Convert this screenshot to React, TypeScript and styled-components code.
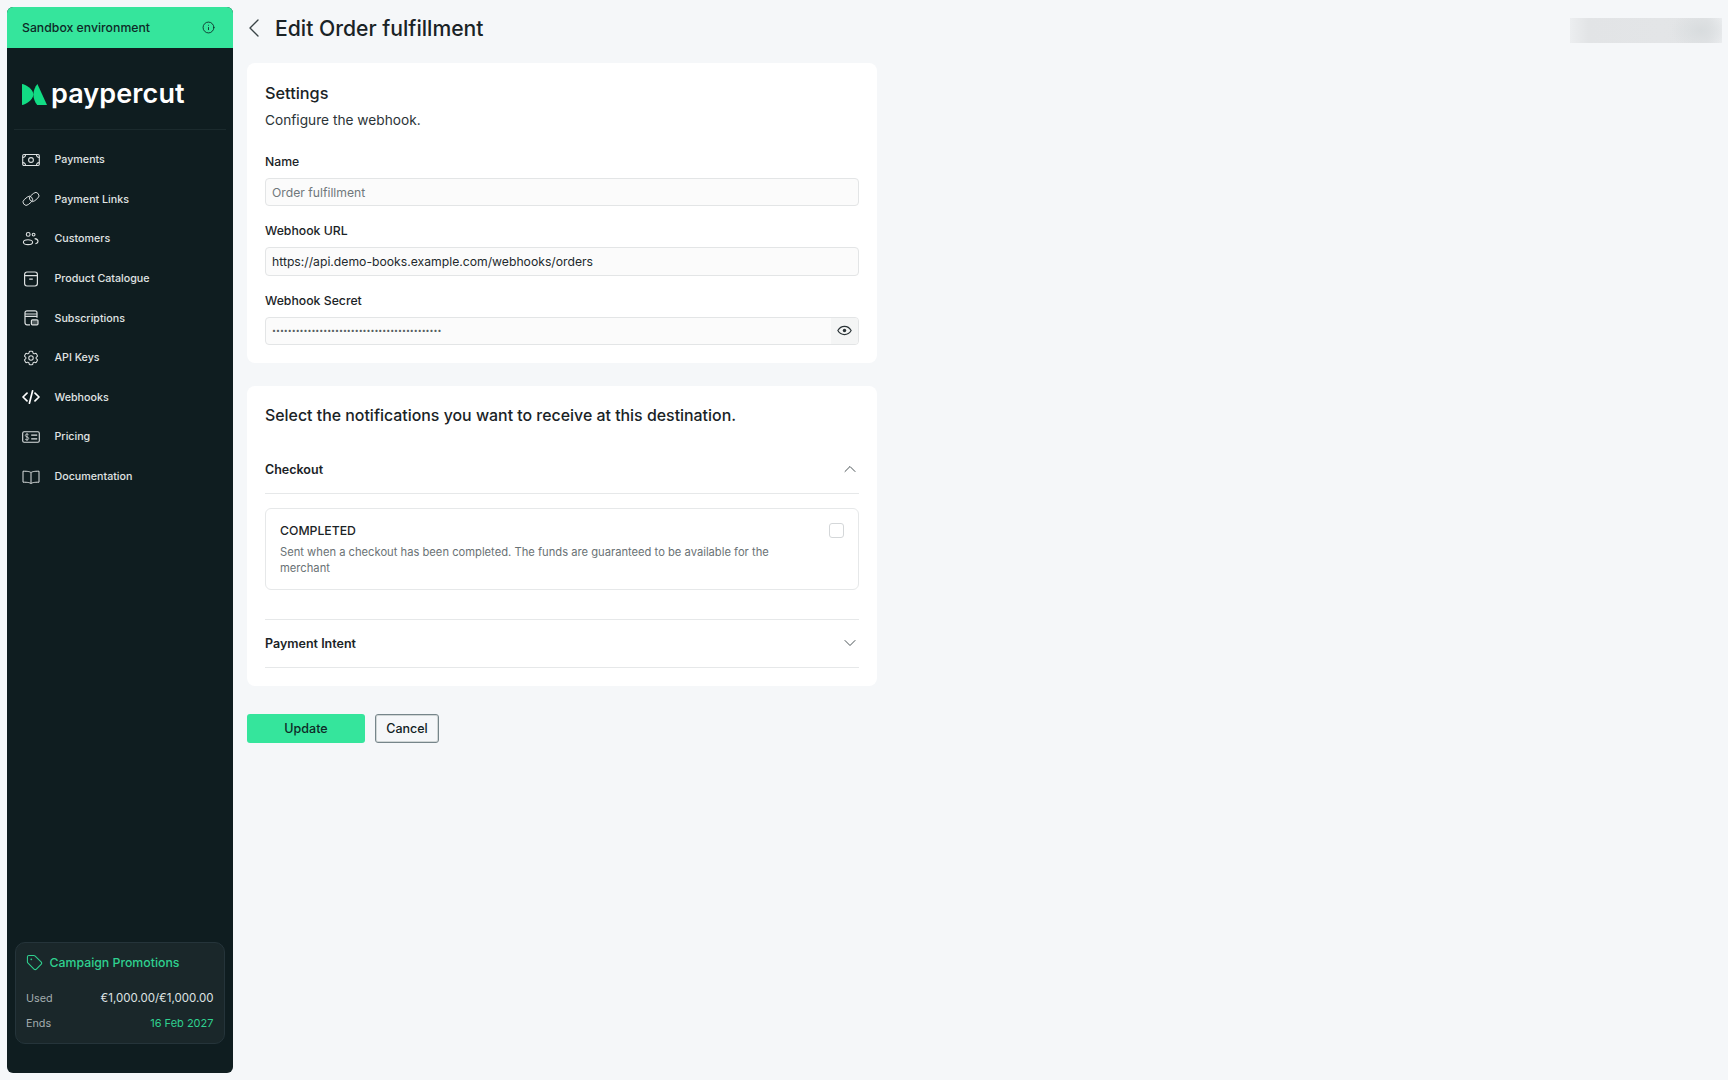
import React from "react";
import styled, { createGlobalStyle } from "styled-components";
import { ChevronDown, ChevronLeft, ChevronUp, Info, Tag } from "lucide-react";
import { HiOutlineCog6Tooth } from "react-icons/hi2";

const GlobalStyle = createGlobalStyle`
  html, body {
    margin: 0;
    padding: 0;
    background: #f5f7f9;
    font-family: "Inter", "Liberation Sans", sans-serif;
    color: #1a2326;
  }
  * {
    box-sizing: border-box;
  }
`;

const PaymentsIcon = () => (
  <svg width="18" height="18" viewBox="0 0 18 18" fill="none" stroke="currentColor" strokeWidth="1.1">
    <rect x="0.7" y="3.5" width="16.6" height="11" rx="1.2" />
    <circle cx="9" cy="9" r="2.4" />
    <path d="M.7 6.4a2.6 2.6 0 0 0 2.8-2.9M14.5 3.5a2.6 2.6 0 0 0 2.8 2.9M.7 11.6a2.6 2.6 0 0 1 2.8 2.9M14.5 14.5a2.6 2.6 0 0 1 2.8-2.9" />
  </svg>
);

const LinkIcon = () => (
  <svg width="18" height="18" viewBox="0 0 18 18" fill="none" stroke="currentColor" strokeWidth="0.9">
    <rect x="0.6" y="7.6" width="10.4" height="6.4" rx="3.2" transform="rotate(-40 5.8 10.8)" />
    <rect x="7" y="3.8" width="10.4" height="6.4" rx="3.2" transform="rotate(-40 12.2 7)" />
  </svg>
);

const CustomersIcon = () => (
  <svg width="18" height="18" viewBox="0 0 18 18" fill="none" stroke="currentColor" strokeWidth="1.1">
    <circle cx="6.2" cy="4.4" r="1.9" />
    <circle cx="11.6" cy="4.6" r="1.4" />
    <ellipse cx="6" cy="12.2" rx="4.6" ry="2.4" />
    <path d="M12.6 8.6c2 .2 3.4 1.2 3.4 2.6 0 1.2-1 2.1-2.6 2.5" />
  </svg>
);

const CatalogueIcon = () => (
  <svg width="18" height="18" viewBox="0 0 18 18" fill="none" stroke="currentColor" strokeWidth="1.2">
    <rect x="2.6" y="2" width="12.8" height="14" rx="2.4" />
    <path d="M2.6 5.6h12.8M7.2 9.2h3.6" />
  </svg>
);

const SubscriptionsIcon = () => (
  <svg width="18" height="18" viewBox="0 0 18 18" fill="none" stroke="currentColor" strokeWidth="1.2">
    <path d="M8 15.8H5a2 2 0 0 1-2-2V3.8a2 2 0 0 1 2-2h8a2 2 0 0 1 2 2v5" />
    <path d="M3 5h12M3 7.4h12" />
    <rect x="9.4" y="10.8" width="6.6" height="5" rx="1" fill="currentColor" fillOpacity="0.3" />
  </svg>
);

const CodeIcon = () => (
  <svg width="18" height="18" viewBox="0 0 18 18" fill="none" stroke="#ffffff" strokeWidth="1.7" strokeLinecap="round" strokeLinejoin="round">
    <path d="M5 5.2 1 9l4 3.8M13 5.2 17 9l-4 3.8M10.6 2.800 7.400 15.200" />
  </svg>
);

const PricingIcon = () => (
  <svg width="18" height="18" viewBox="0 0 18 18" fill="none" stroke="currentColor" strokeWidth="1.1">
    <rect x="0.7" y="3.8" width="16.6" height="10.4" rx="1.4" />
    <path d="M6.6 6.8c-.4-.5-1-.7-1.6-.7-1 0-1.7.5-1.7 1.4 0 1.8 3.4.9 3.4 2.9 0 .9-.8 1.5-1.8 1.5-.7 0-1.3-.3-1.8-.8M5 5.2v7.6" strokeWidth="0.8" />
    <path d="M9.2 7.2h6M9.2 10.8h6" strokeWidth="1.2" />
  </svg>
);

const BookIcon = () => (
  <svg width="18" height="18" viewBox="0 0 18 18" fill="none" stroke="currentColor" strokeWidth="1" strokeLinejoin="round">
    <path d="M9 4.6C7.6 3.6 6 3.2 1 3.2v11c5 0 6.600.4 8 1.4 1.4-1 3-1.4 8-1.4v-11c-5 0-6.600.4-8 1.400Z" />
    <path d="M9 4.6v11" />
  </svg>
);

const EyeIcon = () => (
  <svg width="15" height="15" viewBox="0 0 14 14" fill="none" stroke="#2b3437" strokeWidth="1.1">
    <path d="M.8 7C2.2 4.6 4.4 3.2 7 3.2s4.8 1.4 6.2 3.8c-1.4 2.4-3.6 3.8-6.2 3.8S2.200 9.400.8 7Z" />
    <circle cx="7" cy="7" r="1.6" fill="#2b3437" stroke="none" />
  </svg>
);

const LogoMark = () => (
  <svg width="25" height="21" viewBox="0 0 25 21">
    <path fill="#12dc84" d="M0 0c3.400.4 11 5 11.500 10.500C11 16 3.400 20.600 0 21Z" />
    <path fill="#12dc84" d="M15.400 0 25 21H15.200c-2.400-3-3.800-6.800-3.800-10.300 0-4 1.600-7.900 4-10.700Z" />
  </svg>
);

const navItems = [
  { label: "Payments", icon: <PaymentsIcon /> },
  { label: "Payment Links", icon: <LinkIcon /> },
  { label: "Customers", icon: <CustomersIcon /> },
  { label: "Product Catalogue", icon: <CatalogueIcon /> },
  { label: "Subscriptions", icon: <SubscriptionsIcon /> },
  { label: "API Keys", icon: <HiOutlineCog6Tooth size={20} strokeWidth={1.4} /> },
  { label: "Webhooks", icon: <CodeIcon /> },
  { label: "Pricing", icon: <PricingIcon /> },
  { label: "Documentation", icon: <BookIcon /> },
];

export default function App() {
  return (
    <>
      <GlobalStyle />
      <Page>
        <Sidebar>
          <Banner>
            <span>Sandbox environment</span>
            <Info size={13} strokeWidth={1.6} />
          </Banner>
          <LogoRow>
            <LogoMark />
            <LogoText>paypercut</LogoText>
          </LogoRow>
          <Nav>
            {navItems.map((item) => (
              <NavItem key={item.label}>
                <NavIcon>{item.icon}</NavIcon>
                <span>{item.label}</span>
              </NavItem>
            ))}
          </Nav>
          <Campaign>
            <CampaignTitle>
              <Tag size={17} strokeWidth={1.5} />
              <span>Campaign Promotions</span>
            </CampaignTitle>
            <CampaignRow>
              <CampaignKey>Used</CampaignKey>
              <CampaignValue>€1,000.00/€1,000.00</CampaignValue>
            </CampaignRow>
            <CampaignRow>
              <CampaignKey>Ends</CampaignKey>
              <CampaignValue $accent>16 Feb 2027</CampaignValue>
            </CampaignRow>
          </Campaign>
        </Sidebar>

        <Main>
          <Header>
            <TitleGroup>
              <BackIcon>
                <ChevronLeft size={32} strokeWidth={1} />
              </BackIcon>
              <Title>Edit Order fulfillment</Title>
            </TitleGroup>
            <BlurredBox />
          </Header>

          <Column>
            <Card>
              <CardTitle>Settings</CardTitle>
              <CardText>Configure the webhook.</CardText>
              <Fields>
                <Field>
                  <Label>Name</Label>
                  <InputWrap>
                    <Input placeholder="Order fulfillment" readOnly />
                  </InputWrap>
                </Field>
                <Field>
                  <Label>Webhook URL</Label>
                  <InputWrap>
                    <Input defaultValue="https://api.demo-books.example.com/webhooks/orders" readOnly />
                  </InputWrap>
                </Field>
                <Field>
                  <Label>Webhook Secret</Label>
                  <InputWrap>
                    <SecretInput type="password" defaultValue={"x".repeat(43)} readOnly />
                    <EyeAddon>
                      <EyeIcon />
                    </EyeAddon>
                  </InputWrap>
                </Field>
              </Fields>
            </Card>

            <Card>
              <SectionTitle>Select the notifications you want to receive at this destination.</SectionTitle>
              <AccordionHeader>
                <span>Checkout</span>
                <ChevronUp size={20} strokeWidth={1.1} />
              </AccordionHeader>
              <EventBox>
                <div>
                  <EventTitle>COMPLETED</EventTitle>
                  <EventText>
                    Sent when a checkout has been completed. The funds are guaranteed to be available for the merchant
                  </EventText>
                </div>
                <CheckBox />
              </EventBox>
              <AccordionHeader $closed>
                <span>Payment Intent</span>
                <ChevronDown size={20} strokeWidth={1.1} />
              </AccordionHeader>
            </Card>

            <Actions>
              <PrimaryButton>Update</PrimaryButton>
              <SecondaryButton>Cancel</SecondaryButton>
            </Actions>
          </Column>
        </Main>
      </Page>
    </>
  );
}

const Page = styled.div`
  display: flex;
  gap: 14.5px;
  height: 1080px;
  padding: 7px 6px 7px 7px;
`;

const Sidebar = styled.aside`
  flex: none;
  display: flex;
  flex-direction: column;
  width: 225.500px;
  background: #0f1d20;
  border-radius: 6px;
  overflow: hidden;
`;

const Banner = styled.div`
  flex: none;
  display: flex;
  align-items: center;
  justify-content: space-between;
  height: 41px;
  padding: 0 18px 0 15px;
  background: #35e59c;
  color: #0e2a27;
  font-size: 12.250px;
  font-weight: 500;
`;

const LogoRow = styled.div`
  flex: none;
  display: flex;
  align-items: center;
  gap: 4px;
  height: 82px;
  margin: 0 7px;
  padding: 12px 8px 0;
  border-bottom: 1px solid #1b2a2d;
`;

const LogoText = styled.span`
  color: #ffffff;
  font-family: "Inter", sans-serif;
  font-size: 27px;
  font-weight: 600;
  line-height: 1;
  letter-spacing: 0.1px;
  position: relative;
  top: -1px;
`;

const Nav = styled.nav`
  display: flex;
  flex-direction: column;
  padding-top: 10px;
`;

const NavItem = styled.a`
  display: flex;
  align-items: center;
  gap: 15px;
  height: 39.6px;
  padding-left: 14.500px;
  color: #e0e4e4;
  font-size: 10.700px;
  font-weight: 500;
`;

const NavIcon = styled.span`
  display: flex;
  align-items: center;
  justify-content: center;
  width: 18px;
  height: 18px;
  color: #dde1e1;
`;

const Campaign = styled.section`
  margin: auto 7.500px 29px;
  padding: 9px 10.500px 11px;
  height: 102px;
  background: #1a272a;
  border: 1px solid #25343a;
  border-radius: 10px;
`;

const CampaignTitle = styled.div`
  display: flex;
  align-items: center;
  gap: 6.500px;
  height: 20px;
  margin-bottom: 13.500px;
  color: #2fd08f;
  font-size: 12.300px;
  font-weight: 500;
`;

const CampaignRow = styled.div`
  display: flex;
  align-items: center;
  justify-content: space-between;
  height: 25px;
  font-size: 11.500px;
`;

const CampaignKey = styled.span`
  color: #a3adae;
  font-size: 10.800px;
`;

const CampaignValue = styled.span<{ $accent?: boolean }>`
  color: ${(p) => (p.$accent ? "#2fd08f" : "#dfe3e3")};
  font-size: ${(p) => (p.$accent ? "11px" : "11.500px")};
`;

const Main = styled.main`
  flex: 1;
  display: flex;
  flex-direction: column;
  min-width: 0;
`;

const Header = styled.header`
  flex: none;
  display: flex;
  align-items: center;
  justify-content: space-between;
  height: 42px;
  margin-bottom: 14px;
`;

const TitleGroup = styled.div`
  display: flex;
  align-items: center;
  gap: 11px;
`;

const BackIcon = styled.span`
  display: flex;
  justify-content: center;
  color: #3a4447;
  width: 18px;
  margin-left: -2px;
  margin-right: 1px;

  svg {
    flex: none;
  }
`;

const Title = styled.h1`
  margin: 0;
  font-size: 21.150px;
  font-weight: 500;
  color: #1a2326;
`;

const BlurredBox = styled.div`
  width: 152px;
  height: 25px;
  margin-top: 4px;
  background:
    radial-gradient(ellipse 30px 20px at 86% 50%, #d8dcde, transparent),
    linear-gradient(90deg, #eceef0, #e2e4e6 12%, #e3e5e7 60%, #e2e4e6 90%, #eceef0);
`;

const Column = styled.div`
  display: flex;
  flex-direction: column;
  gap: 22.500px;
  width: 630px;
`;

const Card = styled.section`
  display: flex;
  flex-direction: column;
  padding: 18px 18px 18px;
  background: #ffffff;
  border-radius: 8px;
`;

const CardTitle = styled.h2`
  margin: 0;
  font-size: 16.300px;
  font-weight: 500;
  line-height: 24px;
`;

const CardText = styled.p`
  margin: 4px 0 0;
  font-size: 13.700px;
  line-height: 22px;
  color: #2b3437;
`;

const Fields = styled.div`
  display: flex;
  flex-direction: column;
  gap: 16px;
  margin-top: 22px;
`;

const Field = styled.div`
  display: flex;
  flex-direction: column;
  gap: 7px;
`;

const Label = styled.label`
  font-size: 12.250px;
  font-weight: 500;
  line-height: 18px;
`;

const InputWrap = styled.div`
  display: flex;
  height: 28.400px;
  background: #fbfbfb;
  border: 1px solid #e3e5e6;
  border-radius: 4px;
  overflow: hidden;
`;

const Input = styled.input`
  flex: 1;
  min-width: 0;
  padding: 0 6px;
  border: none;
  outline: none;
  background: transparent;
  color: #22292c;
  font-family: inherit;
  font-size: 12.200px;

  &::placeholder {
    color: #70787b;
  }
`;

const SecretInput = styled(Input)`
  font-size: 7px;
  color: #555d60;
`;

const EyeAddon = styled.span`
  flex: none;
  display: flex;
  align-items: center;
  justify-content: center;
  width: 27px;
  background: #f4f5f5;
`;

const SectionTitle = styled.h2`
  margin: 0;
  padding-top: 1px;
  font-size: 15.900px;
  font-weight: 500;
  line-height: 22px;
`;

const AccordionHeader = styled.div<{ $closed?: boolean }>`
  display: flex;
  align-items: center;
  justify-content: space-between;
  height: ${(p) => (p.$closed ? "49px" : "48px")};
  margin-top: ${(p) => (p.$closed ? "28.400px" : "19px")};
  border-top: ${(p) => (p.$closed ? "1px solid #e6e8e9" : "none")};
  border-bottom: 1px solid #e6e8e9;
  font-size: 12.500px;
  font-weight: 600;
  color: #1a2326;

  svg {
    margin-right: -1px;
    color: #3a4447;
  }
`;

const EventBox = styled.div`
  display: flex;
  align-items: flex-start;
  justify-content: space-between;
  gap: 40px;
  height: 82px;
  margin-top: 14.500px;
  padding: 13px 14px 0 14px;
  border: 1px solid #e6e8e9;
  border-radius: 6px;
`;

const EventTitle = styled.div`
  font-size: 12.250px;
  font-weight: 500;
  line-height: 17px;
`;

const EventText = styled.div`
  margin-top: 4.500px;
  font-size: 11.200px;
  line-height: 16.500px;
  color: #6a7275;
`;

const CheckBox = styled.span`
  flex: none;
  width: 15px;
  height: 15px;
  margin-top: 1px;
  background: #ffffff;
  border: 1px solid #d4d7d9;
  border-radius: 3px;
`;

const Actions = styled.div`
  display: flex;
  gap: 10px;
  margin-top: 6px;
`;

const PrimaryButton = styled.button`
  width: 118px;
  height: 29px;
  border: none;
  border-radius: 3px;
  background: #35e59c;
  color: #0e2a27;
  font-family: inherit;
  font-size: 12.500px;
  font-weight: 500;
`;

const SecondaryButton = styled.button`
  width: 64px;
  height: 29px;
  border: 1px solid #76858a;
  border-radius: 3px;
  box-shadow: inset 0 0 0 1px #d0d6d6;
  background: transparent;
  color: #12221f;
  font-family: inherit;
  font-size: 12.500px;
  font-weight: 500;
`;
